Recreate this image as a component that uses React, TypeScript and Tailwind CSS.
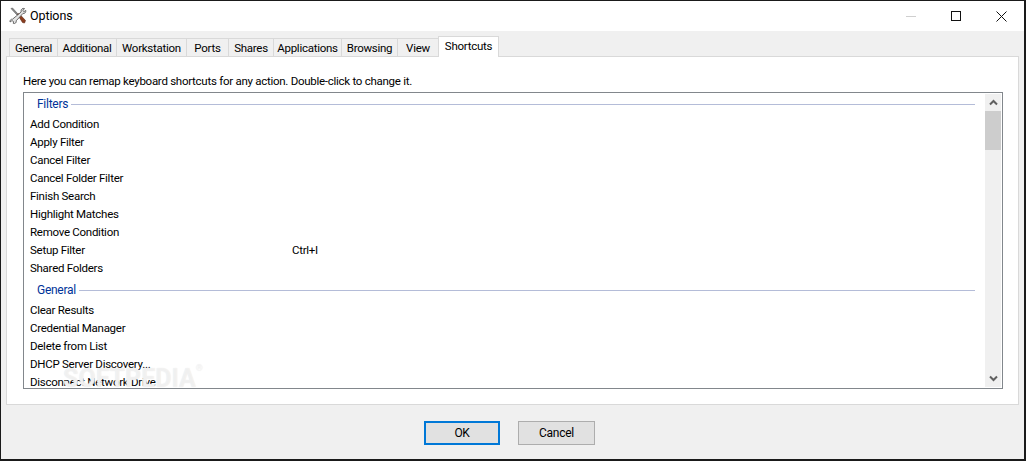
import React from 'react';

const tabs = [
  { name: 'General', width: 'w-[49px]' },
  { name: 'Additional', width: 'w-[60px]' },
  { name: 'Workstation', width: 'w-[71px]' },
  { name: 'Ports', width: 'w-[43px]' },
  { name: 'Shares', width: 'w-[46px]' },
  { name: 'Applications', width: 'w-[69px]' },
  { name: 'Browsing', width: 'w-[57px]' },
  { name: 'View', width: 'w-[42px]' },
];

const groups = [
  {
    title: 'Filters',
    items: [
      ['Add Condition', ''],
      ['Apply Filter', ''],
      ['Cancel Filter', ''],
      ['Cancel Folder Filter', ''],
      ['Finish Search', ''],
      ['Highlight Matches', ''],
      ['Remove Condition', ''],
      ['Setup Filter', 'Ctrl+I'],
      ['Shared Folders', ''],
    ],
  },
  {
    title: 'General',
    items: [
      ['Clear Results', ''],
      ['Credential Manager', ''],
      ['Delete from List', ''],
      ['DHCP Server Discovery...', ''],
      ['Disconnect Network Drive', ''],
    ],
  },
];

const ToolsIcon = () => (
  <svg width="18" height="18" viewBox="0 0 18 18" className="shrink-0">
    {/* screwdriver */}
    <path d="M2 1.5 L3.5 1 L9 7 L8 8 Z" fill="#8c8c8c" stroke="#555" strokeWidth="0.6" />
    <path d="M8.5 7.5 L10 6.5 L16.5 13.5 L15.5 16 L13.5 15.5 Z" fill="#8a3d1e" stroke="#5b2410" strokeWidth="0.6" />
    {/* wrench */}
    <path
      d="M15.5 1.5 C13.5 1 12 2.2 12 4 L12.2 5 L3.5 12.2 C1.8 12 0.8 13.2 1 15 L3 13.6 L4.6 14.6 L4.3 16.4 C6.2 17 7.6 15.6 7.2 13.8 L14 6.4 C15.8 6.8 17 5.4 16.8 3.4 L15 4.6 L13.8 3.6 Z"
      fill="#e4e4e4"
      stroke="#5c5c5c"
      strokeWidth="0.9"
    />
  </svg>
);

const WindowControls = () => (
  <div className="flex items-center">
    <svg width="10" height="10" viewBox="0 0 10 10" className="mr-[35px]">
      <path d="M0 5.5 H10" stroke="#cfcfcf" strokeWidth="1" />
    </svg>
    <svg width="10" height="10" viewBox="0 0 10 10" className="mr-[35px]">
      <rect x="0.5" y="0.5" width="9" height="9" fill="none" stroke="#111" strokeWidth="1" />
    </svg>
    <svg width="11" height="11" viewBox="0 0 11 11" className="mr-[17px]">
      <path d="M0.5 0.5 L10.5 10.5 M10.5 0.5 L0.5 10.5" stroke="#111" strokeWidth="1" />
    </svg>
  </div>
);

const Chevron = ({ up }: { up: boolean }) => (
  <svg width="9" height="7" viewBox="0 0 9 7">
    <path d={up ? 'M1 5.5 L4.5 2 L8 5.5' : 'M1 1.5 L4.5 5 L8 1.5'} fill="none" stroke="#606060" strokeWidth="2" />
  </svg>
);

export default function App() {
  return (
    <div
      className="w-[1026px] h-[461px] overflow-hidden flex flex-col bg-[#f0f0f0] border-t border-l border-r-2 border-b-2 border-[#1a1a1a] text-[11.5px] tracking-[-0.27px] text-black"
      style={{ fontFamily: 'Roboto, "Noto Sans", sans-serif' }}
    >
      <div className="h-[30px] bg-white flex items-center justify-between pl-[8px] shrink-0">
        <div className="flex items-center gap-[3px]">
          <ToolsIcon />
          <span className="text-[12.5px] tracking-[-0.1px]">Options</span>
        </div>
        <WindowControls />
      </div>

      <div className="pl-[8px] flex items-end h-[25px] shrink-0">
        {tabs.map((tab) => (
          <div
            key={tab.name}
            className={`${tab.width} h-[19px] -mb-px pt-px flex items-center justify-center border border-b-0 border-[#d9d9d9] -mr-px bg-[#f0f0f0]`}
          >
            {tab.name}
          </div>
        ))}
        <div className="relative z-10 w-[61px] h-[21px] -mb-px pb-px flex items-center justify-center border border-b-0 border-[#d9d9d9] bg-white">
          Shortcuts
        </div>
      </div>

      <div className="mx-[5px] h-[349px] border border-[#d9d9d9] bg-white pl-[16px] pr-[15px] pt-[13px] flex flex-col shrink-0">
        <p className="h-[22px] leading-[22px] -mt-px pt-px">
          Here you can remap keyboard shortcuts for any action. Double-click to change it.
        </p>
        <div className="relative mt-px h-[297px] border border-[#82878c] flex">
          <div className="flex-1 pl-[6px] pr-[10px] min-w-0">
            {groups.map((group) => (
              <div key={group.title} className="mb-[2px]">
                <div className="h-[22px] pl-[7px] flex items-center">
                  <span className="text-[#003399] text-[12px]">{group.title}</span>
                  <div className="ml-[3px] flex-1 h-px bg-[#b4bcd8]" />
                </div>
                {group.items.map(([label, keys]) => (
                  <div key={label} className="h-[18px] leading-[18px] flex">
                    <span className="w-[262px] shrink-0">{label}</span>
                    <span>{keys}</span>
                  </div>
                ))}
              </div>
            ))}
          </div>
          <div className="w-[16px] my-px mr-px bg-[#f0f0f0] flex flex-col shrink-0">
            <div className="h-[17px] flex items-center justify-center">
              <Chevron up />
            </div>
            <div className="h-[39px] bg-[#cdcdcd]" />
            <div className="flex-1" />
            <div className="h-[17px] flex items-center justify-center">
              <Chevron up={false} />
            </div>
          </div>
          <div className="absolute left-[39px] top-[271px] flex items-start text-white/50 [text-shadow:0_0_1px_#e2e2e2] pointer-events-none">
            <span className="text-[25px] leading-[30px] font-bold tracking-[0px]">SOFTPEDIA</span>
            <span className="text-[9px] leading-[9px]">®</span>
          </div>
        </div>
      </div>

      <div className="flex-1 flex items-center justify-center gap-[18px] pr-[6px] pt-[1px]">
        <button className="w-[76px] h-[24px] pt-px bg-[#e1e1e1] border-2 border-[#0078d7] text-[12px]">OK</button>
        <button className="w-[77px] h-[24px] pt-px bg-[#e1e1e1] border border-[#adadad] text-[12px]">Cancel</button>
      </div>
    </div>
  );
}
